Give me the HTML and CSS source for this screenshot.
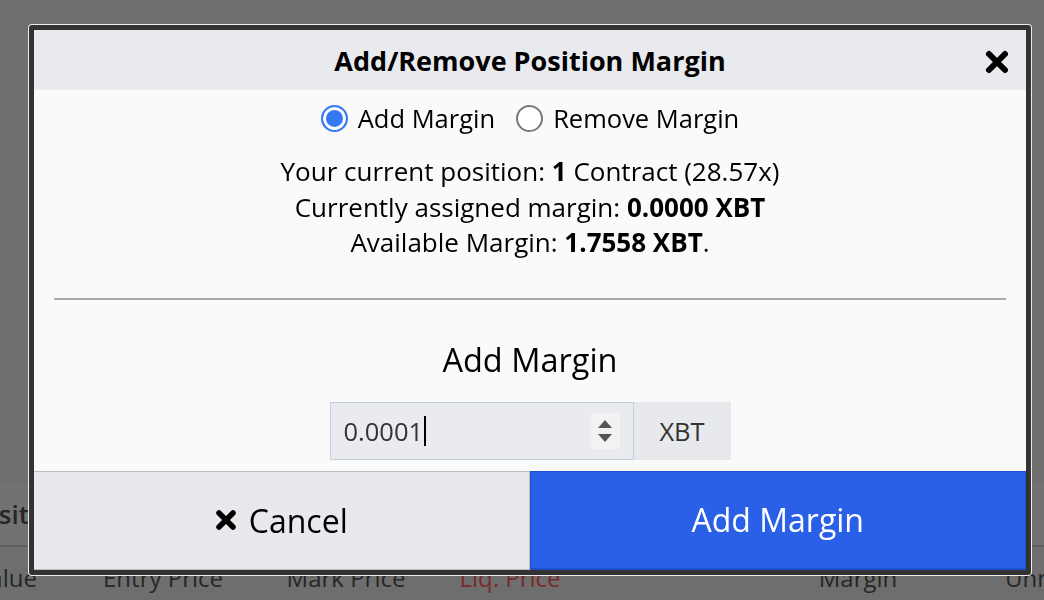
FILE: index.html
```html
<!DOCTYPE html>
<html lang="en">
<head>
    <meta charset="UTF-8">
    <title>Add/Remove Position Margin</title>
    <link rel="stylesheet" href="styles.css">
</head>
<body>

    <div class="page">
        <div class="panel-bar">
            <span class="panel-title">Positions</span>
        </div>
        <div class="col-row">
            <span class="col c1">Value</span>
            <span class="col c2">Entry Price</span>
            <span class="col c3">Mark Price</span>
            <span class="col c4 liq">Liq. Price</span>
            <span class="col c5"></span>
            <span class="col c6">Margin</span>
            <span class="col c7">Unrealized PNL</span>
        </div>
    </div>

    <div class="modal">
        <div class="modal-header">
            <h1>Add/Remove Position Margin</h1>
            <span class="close">
                <svg width="26" height="26" viewBox="0 0 26 26">
                    <path d="M5 5 L21 21 M21 5 L5 21" stroke="#000" stroke-width="6" stroke-linecap="round"/>
                </svg>
            </span>
        </div>
        <div class="modal-body">
            <div class="choice">
                <label><span class="radio checked"></span>Add Margin</label>
                <label><span class="radio"></span>Remove Margin</label>
            </div>
            <div class="info">
                <p>Your current position: <strong>1</strong> Contract (28.57x)</p>
                <p>Currently assigned margin: <strong>0.0000 XBT</strong></p>
                <p>Available Margin: <strong>1.7558 XBT</strong>.</p>
            </div>
            <hr>
            <h2>Add Margin</h2>
            <div class="amount">
                <div class="amount-input">
                    <span class="value">0.0001</span><span class="caret"></span>
                    <span class="spin">
                        <svg width="16" height="28" viewBox="0 0 16 28">
                            <path d="M8 3 L15 11 L1 11 Z" fill="#555"/>
                            <path d="M1 17 L15 17 L8 25 Z" fill="#555"/>
                        </svg>
                    </span>
                </div>
                <div class="addon">XBT</div>
            </div>
        </div>
        <div class="modal-footer">
            <button class="btn-cancel">
                <svg width="22" height="22" viewBox="0 0 22 22">
                    <path d="M4 4 L18 18 M18 4 L4 18" stroke="#000" stroke-width="5.5" stroke-linecap="round"/>
                </svg>
                Cancel
            </button>
            <button class="btn-add">Add Margin</button>
        </div>
    </div>

</body>
</html>
```

FILE: styles.css
```css
body {
    margin: 0;
    width: 1044px;
    height: 600px;
    overflow: hidden;
    background-color: #6e6e6e;
    font-family: 'Open Sans', 'Noto Sans', sans-serif;
    color: #000;
}
.page {
    padding-top: 483px;
}
.panel-bar {
    height: 62px;
    border-bottom: 2px solid #5e5e5e;
    background-color: #727272;
    display: flex;
    align-items: center;
}
.panel-title {
    margin-left: -33px;
    font-size: 26px;
    font-weight: 600;
    color: #262626;
}
.col-row {
    display: grid;
    grid-template-columns: 172px 142px 224px 104px 218px 156px 300px;
    margin-left: -80px;
    padding-top: 14px;
    font-size: 24px;
    color: #262626;
    white-space: nowrap;
}
.col {
    text-align: center;
}
.col.c7 {
    text-align: left;
    padding-left: 69px;
}
.liq {
    color: #7a2a2a;
}

/* boite modale */
.modal {
    position: fixed;
    left: 29px;
    top: 25px;
    width: 992px;
    border: 5px solid #333;
    border-radius: 3px;
    box-shadow: 0 0 0 1px #ececec;
    background-color: #fafafa;
}
.modal-header {
    height: 60px;
    background-color: #e9eaee;
    display: flex;
    align-items: center;
    justify-content: center;
    position: relative;
}
.modal-header h1 {
    margin: 0;
    font-size: 27px;
    font-weight: 700;
}
.close {
    position: absolute;
    right: 16px;
    top: 19px;
    width: 26px;
    height: 26px;
}
.modal-body {
    padding: 0 20px 11px;
    text-align: center;
}
.choice {
    display: flex;
    justify-content: center;
    gap: 21px;
    padding-top: 9px;
    height: 38px;
    font-size: 25.5px;
}
.choice label {
    display: flex;
    align-items: center;
    gap: 10px;
}
.radio {
    width: 23px;
    height: 23px;
    border: 2px solid #777;
    border-radius: 50%;
    background-color: #fff;
    box-sizing: content-box;
}
.radio.checked {
    border-color: #3479f6;
    background-color: #3479f6;
    box-shadow: inset 0 0 0 3px #fff;
}
.info {
    padding-top: 17px;
    font-size: 26px;
    line-height: 35.5px;
}
.info p {
    margin: 0;
}
hr {
    margin: 37px 0 0;
    border: none;
    border-top: 2px solid #aaa;
}
h2 {
    margin: 38px 0 0;
    font-size: 32.5px;
    font-weight: 400;
    line-height: 44px;
}
.amount {
    display: flex;
    justify-content: center;
    margin-top: 20px;
    height: 58px;
}
.amount-input {
    width: 289px;
    border: 1px solid #c2d0dd;
    background-color: #e9ebef;
    display: flex;
    align-items: center;
    padding-left: 13px;
    font-size: 25.5px;
    color: #333;
}
.caret {
    width: 2px;
    height: 30px;
    background-color: #000;
    margin-left: 1px;
}
.spin {
    margin-left: auto;
    margin-right: 13px;
    width: 29px;
    height: 36px;
    background-color: #f2f2f3;
    display: flex;
    align-items: center;
    justify-content: center;
}
.addon {
    width: 97px;
    background-color: #e8e9ec;
    display: flex;
    align-items: center;
    justify-content: center;
    font-size: 25.5px;
    color: #333;
}
.modal-footer {
    display: flex;
    height: 99px;
}
.modal-footer button {
    flex: 1;
    font-family: 'Open Sans', 'Noto Sans', sans-serif;
    font-size: 32px;
    cursor: pointer;
    display: flex;
    align-items: center;
    justify-content: center;
    gap: 12px;
}
.btn-cancel {
    background-color: #e8e9ec;
    color: #000;
    border: 1px solid #bdbdbd;
    border-left: none;
}
.btn-add {
    background-color: #2a5fe8;
    color: #fff;
    border: 1px solid #1f4fcc;
    border-bottom-width: 2px;
}
```
